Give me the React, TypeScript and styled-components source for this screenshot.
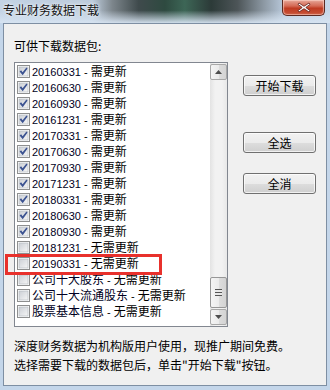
import React from 'react';
import styled, { createGlobalStyle } from 'styled-components';

const GlobalStyle = createGlobalStyle`
  html, body {
    margin: 0;
    padding: 0;
    background: #c4d6ea;
  }
  body {
    font-family: "Noto Sans CJK SC", sans-serif;
    font-size: 12px;
    color: #000;
  }
`;

const packages = [
  { code: '20160331', status: '需更新', checked: true },
  { code: '20160630', status: '需更新', checked: true },
  { code: '20160930', status: '需更新', checked: true },
  { code: '20161231', status: '需更新', checked: true },
  { code: '20170331', status: '需更新', checked: true },
  { code: '20170630', status: '需更新', checked: true },
  { code: '20170930', status: '需更新', checked: true },
  { code: '20171231', status: '需更新', checked: true },
  { code: '20180331', status: '需更新', checked: true },
  { code: '20180630', status: '需更新', checked: true },
  { code: '20180930', status: '需更新', checked: true },
  { code: '20181231', status: '无需更新', checked: false },
  { code: '20190331', status: '无需更新', checked: false },
  { code: '公司十大股东', status: '无需更新', checked: false },
  { code: '公司十大流通股东', status: '无需更新', checked: false },
  { code: '股票基本信息', status: '无需更新', checked: false },
];

const CheckBox = ({ checked }: { checked: boolean }) => (
  <svg width="13" height="13" viewBox="0 0 13 13">
    <defs>
      <linearGradient id="cbg" x1="0" y1="0" x2="1" y2="1">
        <stop offset="0" stopColor="#cbcfd5" />
        <stop offset="1" stopColor="#f6f6f6" />
      </linearGradient>
    </defs>
    <rect x="0.5" y="0.5" width="12" height="12" fill="#fff" stroke="#8e8f8f" />
    <rect x="2" y="2" width="9" height="9" fill="url(#cbg)" stroke="#b0b5bd" strokeWidth="0.6" />
    {checked && (
      <path d="M2.6 6.4 L4.1 5.2 L5.6 7.2 L9.4 2.4 L10.6 3.4 L5.7 10.2 Z" fill="#3c5391" />
    )}
  </svg>
);

const Arrow = ({ up }: { up?: boolean }) => (
  <svg width="7" height="4" viewBox="0 0 7 4">
    <path d={up ? 'M0 4 L3.5 0 L7 4 Z' : 'M0 0 L3.5 4 L7 0 Z'} fill="#4d4d4d" />
  </svg>
);

const CloseGlyph = () => (
  <svg width="14" height="11" viewBox="0 0 14 11">
    <path
      d="M2 1 L7 4.3 L12 1 L13 2.4 L8.8 5.5 L13 8.6 L12 10 L7 6.7 L2 10 L1 8.6 L5.2 5.5 L1 2.4 Z"
      fill="#fff"
      stroke="#5a1a14"
      strokeWidth="0.8"
    />
  </svg>
);

export default function App() {
  return (
    <>
      <GlobalStyle />
      <Window>
        <TitleBar>
          <Title>专业财务数据下载</Title>
          <CloseButton>
            <CloseGlyph />
          </CloseButton>
        </TitleBar>
        <Frame>
          <Client>
            <Main>
              <LeftColumn>
                <Label>可供下载数据包:</Label>
                <ListBox>
                  <Rows>
                    {packages.map((p) => (
                      <Row key={p.code}>
                        <CheckBox checked={p.checked} />
                        <RowText>
                          <Code $latin={/^\d+$/.test(p.code)}>{p.code}</Code>
                          <Dash> - </Dash>
                          {p.status}
                        </RowText>
                      </Row>
                    ))}
                  </Rows>
                  <ScrollBar>
                    <ScrollButton>
                      <Arrow up />
                    </ScrollButton>
                    <Track>
                      <Thumb>
                        <Grip />
                      </Thumb>
                    </Track>
                    <ScrollButton>
                      <Arrow />
                    </ScrollButton>
                  </ScrollBar>
                </ListBox>
              </LeftColumn>
              <ButtonColumn>
                <Button $top={36}>开始下载</Button>
                <Button $top={36}>全选</Button>
                <Button $top={20}>全消</Button>
              </ButtonColumn>
            </Main>
            <Footer>
              <div>深度财务数据为机构版用户使用，现推广期间免费。</div>
              <div>选择需要下载的数据包后，单击"开始下载"按钮。</div>
            </Footer>
          </Client>
        </Frame>
        <Highlight />
      </Window>
    </>
  );
}

const Window = styled.div`
  position: relative;
  width: 330px;
  height: 390px;
  display: flex;
  flex-direction: column;
  background: #c4d6ea;
  overflow: hidden;
`;

const TitleBar = styled.div`
  height: 23px;
  display: flex;
  align-items: flex-start;
  padding: 0 5px 0 3px;
  background:
    linear-gradient(to bottom, rgba(215, 228, 242, 0) 45%, rgba(215, 228, 242, 0.95) 100%),
    linear-gradient(
      to right,
      #c3d3e4 0%,
      #bccbdb 28%,
      #7d868c 34%,
      #3f4a4c 42%,
      #2e4a40 50%,
      #3d6656 56%,
      #2c3a38 64%,
      #4d5558 72%,
      #8d99a4 80%,
      #b8c8da 86%,
      #c7d7e8 100%
    );
`;

const Title = styled.div`
  margin-top: 4px;
  font-size: 12px;
  line-height: 12px;
  color: #111;
  text-shadow: 0 0 4px #f2f6fa, 0 0 2px #f2f6fa;
`;

const CloseButton = styled.div`
  margin-left: auto;
  width: 43px;
  height: 16px;
  box-sizing: border-box;
  display: flex;
  align-items: center;
  justify-content: center;
  border: 1px solid #5c2a22;
  border-top: none;
  border-radius: 0 0 5px 5px;
  background: linear-gradient(to bottom, #e6a596 0%, #d46a55 40%, #bf3b22 55%, #c8553a 100%);
  box-shadow: inset 0 0 1px 1px rgba(255, 220, 210, 0.6);
`;

const Frame = styled.div`
  flex: 1;
  display: flex;
  padding: 0 3px 4px 3px;
`;

const Client = styled.div`
  flex: 1;
  display: flex;
  flex-direction: column;
  box-sizing: border-box;
  background: #f0f0f0;
  border: 1px solid #7e8fa3;
  padding: 15px 10px 0 10px;
`;

const Main = styled.div`
  display: flex;
`;

const LeftColumn = styled.div`
  display: flex;
  flex-direction: column;
`;

const Label = styled.div`
  height: 14px;
  line-height: 14px;
  margin-bottom: 9px;
`;

const ListBox = styled.div`
  width: 214px;
  height: 265px;
  box-sizing: border-box;
  border: 1px solid #828790;
  background: #fff;
  display: flex;
`;

const Rows = styled.div`
  flex: 1;
  display: flex;
  flex-direction: column;
  padding-left: 2px;
`;

const Row = styled.div`
  height: 16px;
  display: flex;
  align-items: center;
  gap: 2px;
`;

const RowText = styled.span`
  font-size: 12px;
  line-height: 16px;
  white-space: nowrap;
`;

const Code = styled.span<{ $latin: boolean }>`
  font-family: ${(p) => (p.$latin ? '"Liberation Sans", Arial' : '"Noto Sans CJK SC"')}, sans-serif;
  font-size: ${(p) => (p.$latin ? '11px' : '12px')};
  color: #000022;
`;

const Dash = styled.span`
  font-family: "Liberation Sans", Arial, sans-serif;
  font-size: 11px;
  white-space: pre;
`;

const ScrollBar = styled.div`
  width: 17px;
  display: flex;
  flex-direction: column;
  background: linear-gradient(to right, #e3e3e3, #f2f2f2 30%, #f2f2f2 70%, #e8e8e8);
`;

const ScrollButton = styled.div`
  height: 16px;
  box-sizing: border-box;
  margin: 1px 0;
  border: 1px solid #a8a8a8;
  border-radius: 2px;
  display: flex;
  align-items: center;
  justify-content: center;
  background: linear-gradient(to right, #f4f4f4 0%, #ebebeb 50%, #dcdcdc 51%, #d4d4d4 100%);
`;

const Track = styled.div`
  flex: 1;
  display: flex;
  flex-direction: column;
  justify-content: flex-end;
`;

const Thumb = styled.div`
  height: 31px;
  box-sizing: border-box;
  border: 1px solid #979797;
  border-radius: 2px;
  display: flex;
  align-items: center;
  justify-content: center;
  background: linear-gradient(to right, #f5f5f5 0%, #ececec 50%, #dddddd 51%, #d3d3d3 100%);
`;

const Grip = styled.div`
  width: 7px;
  height: 7px;
  background: repeating-linear-gradient(
    to bottom,
    #555 0px,
    #555 1px,
    #e8e8e8 1px,
    #e8e8e8 3px
  );
`;

const ButtonColumn = styled.div`
  display: flex;
  flex-direction: column;
  margin-left: 15px;
`;

const Button = styled.div<{ $top: number }>`
  width: 73px;
  height: 21px;
  margin-top: ${(p) => p.$top}px;
  box-sizing: border-box;
  border: 1px solid #707070;
  border-radius: 3px;
  display: flex;
  align-items: center;
  justify-content: center;
  font-size: 12px;
  background: linear-gradient(to bottom, #f2f2f2 0%, #ebebeb 50%, #dddddd 51%, #cfcfcf 100%);
  box-shadow: inset 0 0 0 1px rgba(255, 255, 255, 0.7);
`;

const Footer = styled.div`
  margin-top: 9px;
  line-height: 19px;
  font-size: 12px;
  white-space: nowrap;
`;

const Highlight = styled.div`
  position: absolute;
  left: 5px;
  top: 254px;
  width: 157px;
  height: 21px;
  box-sizing: border-box;
  border: 3px solid #e8312c;
  pointer-events: none;
`;
